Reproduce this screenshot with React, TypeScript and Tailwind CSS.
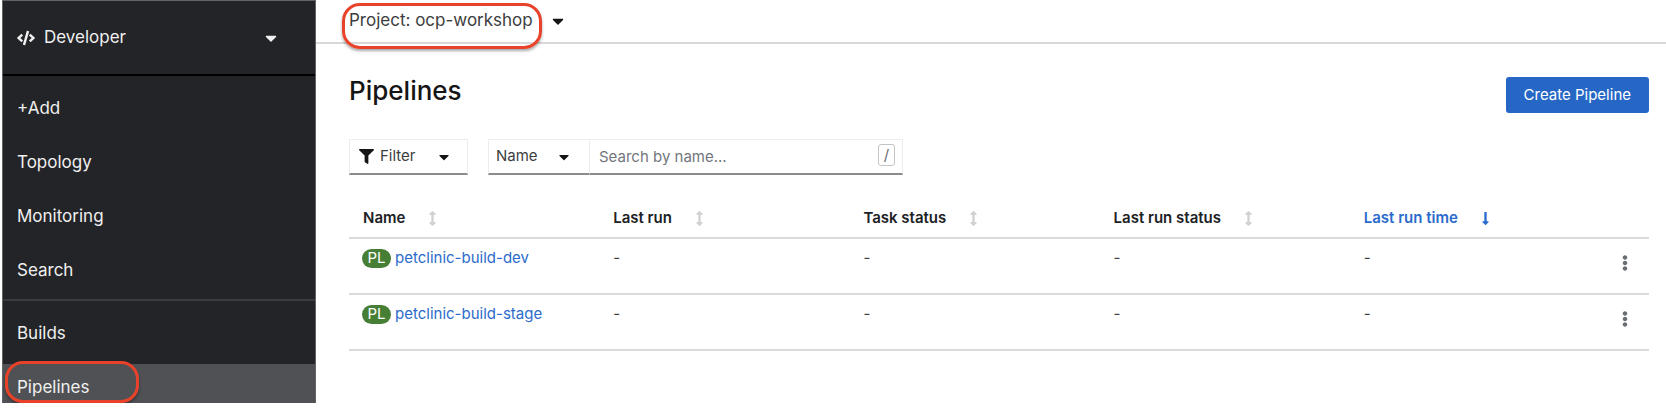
import React from "react";
import {
  FaArrowsAltV,
  FaCaretDown,
  FaCode,
  FaEllipsisV,
  FaFilter,
  FaLongArrowAltDown,
} from "react-icons/fa";

const primaryNav = ["+Add", "Topology", "Monitoring", "Search"];
const columns = ["Name", "Last run", "Task status", "Last run status", "Last run time"];
const pipelines = ["petclinic-build-dev", "petclinic-build-stage"];

function Highlight({ className }: { className: string }) {
  return (
    <span
      aria-hidden="true"
      className={`pointer-events-none absolute rounded-[18px] border-3 border-[#e8432a] shadow-[0_2px_3px_rgba(0,0,0,0.35)] ${className}`}
    />
  );
}

function NavLink({ label, active = false }: { label: string; active?: boolean }) {
  return (
    <a
      href="#"
      aria-current={active ? "page" : undefined}
      className={`relative flex h-11 shrink-0 items-center px-3.5 pt-1 text-[17px] ${active ? "bg-[#505154]" : ""}`}
    >
      {label}
      {active && <Highlight className="-top-[3px] left-0.5 h-[42px] w-[134px]" />}
    </a>
  );
}

function Sidebar() {
  return (
    <nav className="flex w-[314px] shrink-0 flex-col overflow-hidden border-x border-t border-[#626367] bg-[#232427] text-[#f0f0f0]">
      <button className="flex h-[73px] shrink-0 items-center px-3.5 text-[17px]">
        <FaCode className="mr-[9px] size-[18px]" />
        Developer
        <FaCaretDown className="mr-[21px] ml-auto size-[18px]" />
      </button>
      <div className="flex shrink-0 flex-col gap-2.5 border-t-2 border-black pt-[9px] pb-2">
        {primaryNav.map((label) => (
          <NavLink key={label} label={label} />
        ))}
      </div>
      <div className="flex shrink-0 flex-col gap-2.5 border-t-2 border-[#3a3b3f] pt-[9px]">
        <NavLink label="Builds" />
        <NavLink label="Pipelines" active />
      </div>
    </nav>
  );
}

function Toolbar() {
  return (
    <div className="flex gap-5 text-[15px]">
      <button className="flex h-9 w-[119px] items-center border border-b-2 border-[#ededed] border-b-[#8a8d90] pl-[9px]">
        <FaFilter className="mr-1.5 size-[15px] text-[#151515]" />
        Filter
        <FaCaretDown className="ml-5 size-4 text-[#151515]" />
      </button>
      <div className="flex h-9 grow">
        <div className="relative w-[102px]">
          <select
            aria-label="Filter by"
            className="h-9 w-full appearance-none border border-b-2 border-[#ededed] border-b-[#8a8d90] bg-white pl-[7px]"
          >
            <option>Name</option>
            <option>Label</option>
          </select>
          <FaCaretDown className="pointer-events-none absolute top-2.5 right-[18px] size-4 text-[#151515]" />
        </div>
        <div className="relative w-[313px]">
          <input
            type="text"
            aria-label="Search by name"
            placeholder="Search by name..."
            className="h-9 w-full border border-b-2 border-l-0 border-[#ededed] border-b-[#8a8d90] pr-10 pl-[9px] placeholder:text-[#72767b]"
          />
          <kbd className="pointer-events-none absolute top-[5px] right-2 flex h-[22px] w-[17px] items-center justify-center rounded-[3px] border border-[#c4c4c4] font-['Inter',sans-serif] text-[15px] text-[#6a6e73]">
            /
          </kbd>
        </div>
      </div>
    </div>
  );
}

function PipelineTable() {
  return (
    <table className="mt-2 w-full table-fixed text-left text-[15px]">
      <thead>
        <tr className="h-[55px] border-b-2 border-[#dadada]">
          {columns.map((label) => {
            const sorted = label === "Last run time";
            return (
              <th
                key={label}
                aria-sort={sorted ? "descending" : undefined}
                className={`pt-4 pl-3.5 font-semibold ${sorted ? "text-[#2b6bcb]" : "text-[#202124]"}`}
              >
                <button className="flex items-center">
                  {label}
                  {sorted ? (
                    <FaLongArrowAltDown className="ml-5 size-[15px]" />
                  ) : (
                    <FaArrowsAltV className="ml-5 size-[15px] text-[#d2d2d2]" />
                  )}
                </button>
              </th>
            );
          })}
          <td className="w-[49px]" />
        </tr>
      </thead>
      <tbody>
        {pipelines.map((name) => (
          <tr key={name} className="h-14 border-b-2 border-[#dadada] align-top">
            <td className="pt-2 pl-[13px]">
              <div className="flex items-center">
                <span className="mr-1 flex h-[19px] w-[29px] items-center justify-center rounded-full bg-[#477e36] text-[15px] text-white">
                  PL
                </span>
                <a href="#" className="whitespace-nowrap text-[#2b6bcb]">
                  {name}
                </a>
              </div>
            </td>
            {columns.slice(1).map((label) => (
              <td key={label} className="pt-2 pl-3.5">
                -
              </td>
            ))}
            <td>
              <button aria-label={`Actions for ${name}`} className="mt-4 ml-[17px] block">
                <FaEllipsisV className="size-4 text-[#6a6e73]" />
              </button>
            </td>
          </tr>
        ))}
      </tbody>
    </table>
  );
}

export default function App() {
  return (
    <div className="flex h-screen overflow-hidden bg-white pb-[5px] pl-0.5 font-['Inter',sans-serif] text-[#3c3d40]">
      <Sidebar />
      <main className="flex min-w-0 grow flex-col">
        <div className="flex h-11 shrink-0 items-start border-b-2 border-[#d8d8d8] pt-2 pl-[33px]">
          <button className="flex items-center text-[17px]">
            <span className="relative">
              Project: ocp-workshop
              <Highlight className="-top-[5px] -right-[9px] -left-[7px] h-[46px]" />
            </span>
            <FaCaretDown className="ml-4 size-[18px] text-[#151515]" />
          </button>
        </div>
        <div className="pr-[17px] pl-[33px]">
          <div className="flex h-[95px] items-start justify-between pt-[29px]">
            <h1 className="text-[26px] leading-9 font-medium text-[#151515]">Pipelines</h1>
            <button className="mt-1 h-9 rounded-[3px] bg-[#2667c6] px-[18px] text-[15px] text-white">
              Create Pipeline
            </button>
          </div>
          <Toolbar />
          <PipelineTable />
        </div>
      </main>
    </div>
  );
}
